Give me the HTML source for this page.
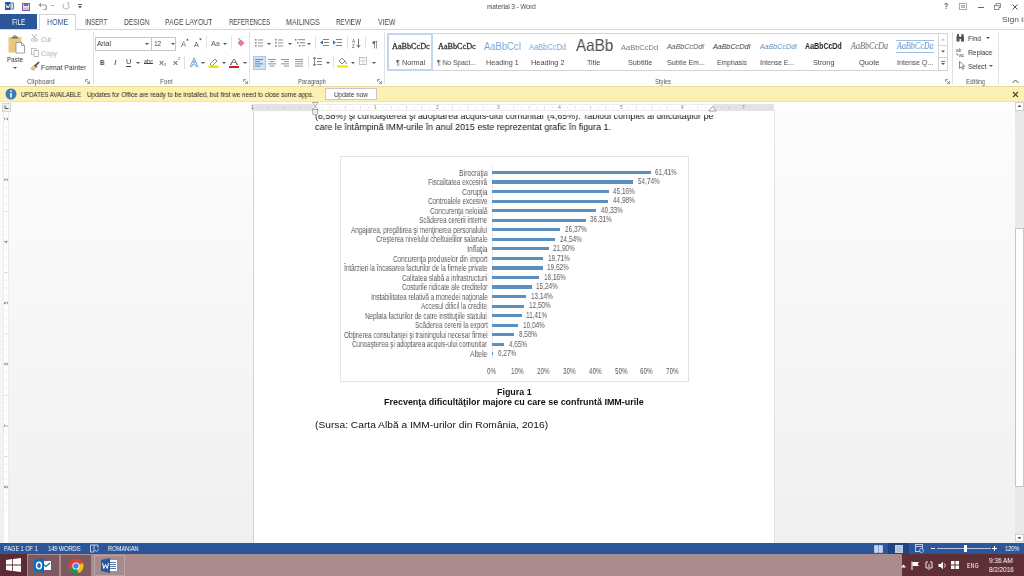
<!DOCTYPE html>
<html><head><meta charset="utf-8">
<style>
*{margin:0;padding:0;box-sizing:border-box}
html,body{width:1024px;height:576px;overflow:hidden;background:#fff;font-family:"Liberation Sans",sans-serif;position:relative}
.t{position:absolute;white-space:nowrap;transform-origin:0 0;will-change:transform}
.r{position:absolute}
</style></head><body>
<div class="r" style="left:0px;top:0px;width:1024px;height:29px;background:#fff"></div>
<div class="r" style="left:0px;top:29px;width:1024px;height:57px;background:#fff;border-top:1px solid #d6d6d6"></div>
<div class="r" style="left:0px;top:86px;width:1024px;height:16px;background:#fbf1b3;border-top:1px solid #e9dd9c;border-bottom:1px solid #efe5ab"></div>
<div class="r" style="left:0px;top:102px;width:1024px;height:441px;background:linear-gradient(#fdfdfd,#f0f0f0)"></div>
<div class="r" style="left:253px;top:110px;width:522px;height:433px;background:#fff;border-left:1px solid #d4d4d4;border-right:1px solid #e2e2e2"></div>
<div class="r" style="left:0px;top:543px;width:1024px;height:11px;background:#2b579a"></div>
<div class="r" style="left:0px;top:554px;width:1024px;height:22px;background:#aa8b8e"></div>
<svg class="r" style="left:5px;top:2px" width="9" height="8" viewBox="0 0 9 8"><rect x="4" y="1" width="4.5" height="6" fill="#fff" stroke="#2b579a" stroke-width="0.8"/><path d="M5.5 3 H7.5 M5.5 5 H7.5" stroke="#2b579a" stroke-width="0.6"/><rect x="0" y="0" width="5.5" height="8" fill="#2b579a"/><path d="M0.9 2.2 L1.9 6 L2.75 3.8 L3.6 6 L4.6 2.2" fill="none" stroke="#fff" stroke-width="0.8"/></svg>
<svg class="r" style="left:21.5px;top:2.5px" width="8" height="8" viewBox="0 0 8 8"><rect x="0.6" y="0.6" width="6.8" height="6.8" fill="#fff" stroke="#7e5fa3" stroke-width="1.2"/><rect x="2" y="0.6" width="4" height="2.6" fill="#7e5fa3"/><rect x="1.6" y="4.4" width="4.8" height="2.4" fill="#c9b8de"/></svg>
<svg class="r" style="left:38px;top:2px" width="9" height="8" viewBox="0 0 9 8"><path d="M2 3 L6 3 Q8.5 3 8.5 5.5 Q8.5 8 6 8 L4 8" fill="none" stroke="#9a9a9a" stroke-width="1.2"/><path d="M0.5 3 L3 0.5 L3 5.5 Z" fill="#9a9a9a"/></svg>
<div class="r" style="left:51px;top:5px;width:3px;height:1px;background:#b0b0b0"></div>
<svg class="r" style="left:61.5px;top:2px" width="8" height="8" viewBox="0 0 8 8"><path d="M5.8 1.6 A3 3 0 1 1 2.2 1.6" fill="none" stroke="#bdbdbd" stroke-width="1.1"/><path d="M4.6 0.2 L7.6 0.4 L6.6 3.2Z" fill="#bdbdbd"/></svg>
<div class="r" style="left:78px;top:4px;width:4px;height:1px;background:#555"></div>
<svg class="r" style="left:78px;top:6px" width="4" height="3" viewBox="0 0 4 3"><path d="M0 0 L4 0 L2 2.5 Z" fill="#555"/></svg>
<div class="t" style="left:487.00px;top:3.37px;font-size:7.6px;line-height:7.6px;color:#444;font-family:'Liberation Sans',sans-serif;transform:scale(0.838,1.000);">material 3 - Word</div>
<div class="t" style="left:944.30px;top:2.40px;font-size:8.5px;line-height:8.5px;color:#555;font-family:'Liberation Sans',sans-serif;font-weight:bold;transform:scale(0.810,1.000);">?</div>
<svg class="r" style="left:959px;top:3px" width="8" height="7" viewBox="0 0 8 7"><rect x="0.5" y="0.5" width="7" height="6" fill="none" stroke="#999" stroke-width="0.8"/><rect x="2" y="2" width="4" height="3" fill="#aaa"/><path d="M2.8 4.3 L4 3 L5.2 4.3" fill="none" stroke="#fff" stroke-width="0.7"/></svg>
<div class="r" style="left:977.5px;top:6.5px;width:6px;height:1px;background:#666"></div>
<svg class="r" style="left:994px;top:3px" width="7" height="7" viewBox="0 0 7 7"><rect x="0.5" y="2.5" width="4.5" height="4" fill="none" stroke="#777" stroke-width="0.8"/><path d="M2 2.5 V0.5 H6.5 V4.5 H5" fill="none" stroke="#777" stroke-width="0.8"/></svg>
<svg class="r" style="left:1011.5px;top:3.5px" width="6" height="6" viewBox="0 0 6 6"><path d="M0.5 0.5 L5.5 5.5 M5.5 0.5 L0.5 5.5" stroke="#555" stroke-width="1"/></svg>
<div class="t" style="left:1002.00px;top:15.53px;font-size:8px;line-height:8px;color:#555;font-family:'Liberation Sans',sans-serif;transform:scale(1.062,1.000);">Sign in</div>
<div class="r" style="left:0px;top:14px;width:37px;height:15px;background:#2b579a"></div>
<div class="t" style="left:11.80px;top:17.79px;font-size:8.4px;line-height:8.4px;color:#fff;font-family:'Liberation Sans',sans-serif;transform:scale(0.745,1.000);">FILE</div>
<div class="r" style="left:39px;top:14px;width:37px;height:16px;background:#fff;border:1px solid #d4d4d4;border-bottom:none"></div>
<div class="t" style="left:46.50px;top:17.79px;font-size:8.4px;line-height:8.4px;color:#2f5a94;font-family:'Liberation Sans',sans-serif;transform:scale(0.853,1.000);">HOME</div>
<div class="t" style="left:84.70px;top:17.79px;font-size:8.4px;line-height:8.4px;color:#444;font-family:'Liberation Sans',sans-serif;transform:scale(0.727,1.000);">INSERT</div>
<div class="t" style="left:123.50px;top:17.79px;font-size:8.4px;line-height:8.4px;color:#444;font-family:'Liberation Sans',sans-serif;transform:scale(0.792,1.000);">DESIGN</div>
<div class="t" style="left:165.00px;top:17.79px;font-size:8.4px;line-height:8.4px;color:#444;font-family:'Liberation Sans',sans-serif;transform:scale(0.818,1.000);">PAGE LAYOUT</div>
<div class="t" style="left:228.80px;top:17.79px;font-size:8.4px;line-height:8.4px;color:#444;font-family:'Liberation Sans',sans-serif;transform:scale(0.718,1.000);">REFERENCES</div>
<div class="t" style="left:286.00px;top:17.79px;font-size:8.4px;line-height:8.4px;color:#444;font-family:'Liberation Sans',sans-serif;transform:scale(0.842,1.000);">MAILINGS</div>
<div class="t" style="left:336.00px;top:17.79px;font-size:8.4px;line-height:8.4px;color:#444;font-family:'Liberation Sans',sans-serif;transform:scale(0.754,1.000);">REVIEW</div>
<div class="t" style="left:377.80px;top:17.79px;font-size:8.4px;line-height:8.4px;color:#444;font-family:'Liberation Sans',sans-serif;transform:scale(0.815,1.000);">VIEW</div>
<svg class="r" style="left:8px;top:34.5px" width="17" height="19" viewBox="0 0 17 19"><rect x="0.5" y="2" width="13" height="15.5" rx="0.5" fill="#e9c77c"/><path d="M3.5 3.5 L4.5 1.5 H9.5 L10.5 3.5Z" fill="#707070"/><circle cx="7" cy="1.3" r="1.1" fill="none" stroke="#707070" stroke-width="0.7"/><path d="M8 7.5 H13.5 L16.5 10.5 V18 H8 Z" fill="#fff" stroke="#8a8a8a" stroke-width="0.8"/><path d="M13.5 7.5 V10.5 H16.5" fill="none" stroke="#8a8a8a" stroke-width="0.8"/></svg>
<div class="t" style="left:7.00px;top:55.51px;font-size:7.2px;line-height:7.2px;color:#333;font-family:'Liberation Sans',sans-serif;transform:scale(0.870,1.000);">Paste</div>
<svg class="r" style="left:13px;top:67px" width="4" height="3" viewBox="0 0 4 3"><path d="M0 0 L4 0 L2 2 Z" fill="#555"/></svg>
<svg class="r" style="left:31px;top:34px" width="7" height="8" viewBox="0 0 7 8"><circle cx="1.8" cy="6" r="1.4" fill="none" stroke="#b0b0c8" stroke-width="0.8"/><circle cx="5.2" cy="6" r="1.4" fill="none" stroke="#b0b0c8" stroke-width="0.8"/><path d="M1 0 L5 4.8 M6 0 L2 4.8" stroke="#aaa" stroke-width="0.8"/></svg>
<div class="t" style="left:41.00px;top:35.61px;font-size:7.2px;line-height:7.2px;color:#a8a8a8;font-family:'Liberation Sans',sans-serif;transform:scale(0.875,1.000);">Cut</div>
<svg class="r" style="left:31px;top:48px" width="8" height="9" viewBox="0 0 8 9"><rect x="0.5" y="0.5" width="4.5" height="6" fill="#fff" stroke="#b0b0b0" stroke-width="0.8"/><rect x="3" y="2.5" width="4.5" height="6" fill="#fff" stroke="#b0b0b0" stroke-width="0.8"/></svg>
<div class="t" style="left:41.00px;top:49.71px;font-size:7.2px;line-height:7.2px;color:#a8a8a8;font-family:'Liberation Sans',sans-serif;transform:scale(0.952,1.000);">Copy</div>
<svg class="r" style="left:30px;top:61px" width="10" height="10" viewBox="0 0 10 10"><path d="M0.8 7.5 L3.5 4.8 L5.8 7.1 L3.1 9.8Z" fill="#e2c27a" stroke="#c9a24e" stroke-width="0.5"/><path d="M3.9 4.4 L5.2 3.1 L7.5 5.4 L6.2 6.7Z" fill="#555"/><path d="M5.6 3.2 L8.6 0.4 L9.6 1.4 L6.8 4.4Z" fill="#444"/></svg>
<div class="t" style="left:41.00px;top:64.11px;font-size:7.2px;line-height:7.2px;color:#333;font-family:'Liberation Sans',sans-serif;transform:scale(0.945,1.000);">Format Painter</div>
<div class="t" style="left:27.30px;top:77.51px;font-size:7.2px;line-height:7.2px;color:#555;font-family:'Liberation Sans',sans-serif;transform:scale(0.899,1.000);">Clipboard</div>
<svg class="r" style="left:85px;top:79px" width="5" height="5" viewBox="0 0 5 5"><path d="M0.5 0.5 H3 M0.5 0.5 V3 M1.5 1.5 L4.5 4.5 M4.5 2 V4.5 H2" fill="none" stroke="#777" stroke-width="0.7"/></svg>
<div class="r" style="left:93px;top:32px;width:1px;height:52px;background:#e2e2e2"></div>
<div class="r" style="left:95px;top:37px;width:57px;height:14px;background:#fff;border:1px solid #c6c6c6"></div>
<div class="r" style="left:151px;top:37px;width:25px;height:14px;background:#fff;border:1px solid #c6c6c6"></div>
<div class="t" style="left:96.60px;top:40.07px;font-size:7.6px;line-height:7.6px;color:#333;font-family:'Liberation Sans',sans-serif;transform:scale(0.914,1.000);">Arial</div>
<svg class="r" style="left:145px;top:43px" width="4" height="3" viewBox="0 0 4 3"><path d="M0 0 L4 0 L2 2 Z" fill="#555"/></svg>
<div class="t" style="left:154.00px;top:40.07px;font-size:7.6px;line-height:7.6px;color:#333;font-family:'Liberation Sans',sans-serif;transform:scale(0.830,1.000);">12</div>
<svg class="r" style="left:170.5px;top:43px" width="4" height="3" viewBox="0 0 4 3"><path d="M0 0 L4 0 L2 2 Z" fill="#555"/></svg>
<div class="t" style="left:181.40px;top:40.30px;font-size:8.5px;line-height:8.5px;color:#555;font-family:'Liberation Sans',sans-serif;transform:scale(0.896,1.000);">A</div>
<svg class="r" style="left:186px;top:38px" width="3" height="3" viewBox="0 0 3 3"><path d="M0 2.5 L1.5 0.5 L3 2.5Z" fill="#555"/></svg>
<div class="t" style="left:194.40px;top:41.41px;font-size:7.2px;line-height:7.2px;color:#555;font-family:'Liberation Sans',sans-serif;transform:scale(0.954,1.000);">A</div>
<svg class="r" style="left:199px;top:38px" width="3" height="3" viewBox="0 0 3 3"><path d="M0 0.5 L1.5 2.5 L3 0.5Z" fill="#555"/></svg>
<div class="r" style="left:206px;top:36px;width:1px;height:13px;background:#e2e2e2"></div>
<div class="t" style="left:211.00px;top:39.57px;font-size:7.6px;line-height:7.6px;color:#555;font-family:'Liberation Sans',sans-serif;transform:scale(0.934,1.000);">Aa</div>
<svg class="r" style="left:222.5px;top:43px" width="4" height="3" viewBox="0 0 4 3"><path d="M0 0 L4 0 L2 2 Z" fill="#555"/></svg>
<div class="r" style="left:231px;top:36px;width:1px;height:13px;background:#e2e2e2"></div>
<svg class="r" style="left:236px;top:38px" width="9" height="9" viewBox="0 0 9 9"><path d="M1.5 5 L5 1.5 L8.5 5 L5 8.5Z" fill="#e87a9a"/><path d="M2 1 L3.5 0.5 L4 3" stroke="#777" stroke-width="0.6" fill="none"/></svg>
<div class="t" style="left:99.50px;top:58.91px;font-size:7.2px;line-height:7.2px;color:#444;font-family:'Liberation Sans',sans-serif;font-weight:bold;transform:scale(0.868,1.000);">B</div>
<div class="t" style="left:113.50px;top:58.91px;font-size:7.2px;line-height:7.2px;color:#444;font-family:'Liberation Sans',sans-serif;font-style:italic;transform:scale(1.240,1.000);">I</div>
<div class="t" style="left:125.50px;top:58.21px;font-size:7.2px;line-height:7.2px;color:#444;font-family:'Liberation Sans',sans-serif;transform:scale(1.061,1.000);">U</div>
<div class="r" style="left:125.5px;top:66px;width:5.5px;height:0.8px;background:#444"></div>
<svg class="r" style="left:136px;top:62px" width="4" height="3" viewBox="0 0 4 3"><path d="M0 0 L4 0 L2 2 Z" fill="#555"/></svg>
<div class="t" style="left:144.00px;top:59.24px;font-size:6.8px;line-height:6.8px;color:#444;font-family:'Liberation Sans',sans-serif;transform:scale(0.822,1.000);">abc</div>
<div class="r" style="left:144px;top:62.5px;width:9px;height:0.7px;background:#444"></div>
<div class="t" style="left:159.00px;top:58.57px;font-size:7.6px;line-height:7.6px;color:#444;font-family:'Liberation Sans',sans-serif;transform:scale(1.316,1.000);">x</div>
<div class="t" style="left:164.00px;top:63.11px;font-size:4px;line-height:4px;color:#444;font-family:'Liberation Sans',sans-serif;transform:scale(0.901,1.000);">2</div>
<div class="t" style="left:172.50px;top:58.57px;font-size:7.6px;line-height:7.6px;color:#444;font-family:'Liberation Sans',sans-serif;transform:scale(1.316,1.000);">x</div>
<div class="t" style="left:177.50px;top:57.11px;font-size:4px;line-height:4px;color:#444;font-family:'Liberation Sans',sans-serif;transform:scale(0.901,1.000);">2</div>
<div class="r" style="left:184px;top:56px;width:1px;height:13px;background:#e2e2e2"></div>
<svg class="r" style="left:189px;top:57px" width="10" height="10" viewBox="0 0 10 10"><path d="M1.2 9.5 L5 0.8 L8.8 9.5 H7 L6.2 7.2 H3.8 L3 9.5Z M4.3 5.8 H5.7 L5 3.6Z" fill="#fff" stroke="#6a9fd8" stroke-width="0.9"/></svg>
<svg class="r" style="left:201px;top:62px" width="4" height="3" viewBox="0 0 4 3"><path d="M0 0 L4 0 L2 2 Z" fill="#555"/></svg>
<svg class="r" style="left:208px;top:57px" width="11" height="11" viewBox="0 0 11 11"><path d="M2 7 L7 2 L9 4 L4 9Z" fill="none" stroke="#666" stroke-width="0.8"/><rect x="0.5" y="8.5" width="10" height="2.5" fill="#f5e100"/></svg>
<svg class="r" style="left:221.5px;top:62px" width="4" height="3" viewBox="0 0 4 3"><path d="M0 0 L4 0 L2 2 Z" fill="#555"/></svg>
<div class="t" style="left:229.50px;top:57.60px;font-size:8.5px;line-height:8.5px;color:#444;font-family:'Liberation Sans',sans-serif;transform:scale(1.405,1.000);">A</div>
<div class="r" style="left:229px;top:66px;width:10px;height:2px;background:#d22020"></div>
<svg class="r" style="left:243px;top:62px" width="4" height="3" viewBox="0 0 4 3"><path d="M0 0 L4 0 L2 2 Z" fill="#555"/></svg>
<div class="t" style="left:159.50px;top:77.51px;font-size:7.2px;line-height:7.2px;color:#555;font-family:'Liberation Sans',sans-serif;transform:scale(0.868,1.000);">Font</div>
<svg class="r" style="left:243px;top:79px" width="5" height="5" viewBox="0 0 5 5"><path d="M0.5 0.5 H3 M0.5 0.5 V3 M1.5 1.5 L4.5 4.5 M4.5 2 V4.5 H2" fill="none" stroke="#777" stroke-width="0.7"/></svg>
<div class="r" style="left:249px;top:32px;width:1px;height:52px;background:#e2e2e2"></div>
<svg class="r" style="left:255px;top:39px" width="8" height="11" viewBox="0 0 8 11"><rect x="0" y="0.0" width="1.6" height="1.6" fill="#888"/><rect x="3" y="0.5" width="5" height="0.9" fill="#888"/><rect x="0" y="3.0" width="1.6" height="1.6" fill="#888"/><rect x="3" y="3.5" width="5" height="0.9" fill="#888"/><rect x="0" y="6.0" width="1.6" height="1.6" fill="#888"/><rect x="3" y="6.5" width="5" height="0.9" fill="#888"/></svg>
<svg class="r" style="left:267px;top:43px" width="4" height="3" viewBox="0 0 4 3"><path d="M0 0 L4 0 L2 2 Z" fill="#555"/></svg>
<svg class="r" style="left:275px;top:39px" width="8" height="11" viewBox="0 0 8 11"><rect x="0" y="0.0" width="1.6" height="1.6" fill="#888"/><rect x="3" y="0.5" width="5" height="0.9" fill="#888"/><rect x="0" y="3.0" width="1.6" height="1.6" fill="#888"/><rect x="3" y="3.5" width="5" height="0.9" fill="#888"/><rect x="0" y="6.0" width="1.6" height="1.6" fill="#888"/><rect x="3" y="6.5" width="5" height="0.9" fill="#888"/></svg>
<svg class="r" style="left:287.5px;top:43px" width="4" height="3" viewBox="0 0 4 3"><path d="M0 0 L4 0 L2 2 Z" fill="#555"/></svg>
<svg class="r" style="left:295px;top:39px" width="10" height="9" viewBox="0 0 10 9"><rect x="0" y="0" width="1.5" height="1.5" fill="#777"/><rect x="3" y="0.3" width="7" height="0.9" fill="#777"/><rect x="2" y="3" width="1.5" height="1.5" fill="#777"/><rect x="5" y="3.3" width="5" height="0.9" fill="#777"/><rect x="4" y="6" width="1.5" height="1.5" fill="#777"/><rect x="7" y="6.3" width="3" height="0.9" fill="#777"/></svg>
<svg class="r" style="left:307px;top:43px" width="4" height="3" viewBox="0 0 4 3"><path d="M0 0 L4 0 L2 2 Z" fill="#555"/></svg>
<div class="r" style="left:315px;top:36px;width:1px;height:13px;background:#e2e2e2"></div>
<svg class="r" style="left:320px;top:39px" width="9" height="8" viewBox="0 0 9 8"><rect x="3" y="0" width="6" height="0.9" fill="#777"/><rect x="4" y="3" width="5" height="0.9" fill="#777"/><rect x="3" y="6" width="6" height="0.9" fill="#777"/><path d="M0 3.5 L3 1.5 V5.5Z" fill="#2e6db4"/></svg>
<svg class="r" style="left:333px;top:39px" width="9" height="8" viewBox="0 0 9 8"><rect x="3" y="0" width="6" height="0.9" fill="#777"/><rect x="4" y="3" width="5" height="0.9" fill="#777"/><rect x="3" y="6" width="6" height="0.9" fill="#777"/><path d="M3 3.5 L0 1.5 V5.5Z" fill="#2e6db4"/></svg>
<div class="r" style="left:347px;top:36px;width:1px;height:13px;background:#e2e2e2"></div>
<svg class="r" style="left:352px;top:38px" width="9" height="10" viewBox="0 0 9 10"><text x="0" y="4.5" font-size="4.5" fill="#555" font-family="Liberation Sans">A</text><text x="0" y="9.5" font-size="4.5" fill="#555" font-family="Liberation Sans">Z</text><path d="M6.5 0.5 V9 M4.8 7 L6.5 9.5 L8.2 7" fill="none" stroke="#555" stroke-width="0.8"/></svg>
<div class="r" style="left:365px;top:36px;width:1px;height:13px;background:#e2e2e2"></div>
<div class="t" style="left:372.30px;top:39.80px;font-size:8.5px;line-height:8.5px;color:#666;font-family:'Liberation Sans',sans-serif;transform:scale(1.319,1.000);">¶</div>
<div class="r" style="left:252.5px;top:56px;width:13px;height:14px;background:#cfe2f7;border:1px solid #a6c8ec"></div>
<svg class="r" style="left:255px;top:59px" width="8" height="8" viewBox="0 0 8 8"><rect x="0" y="0.0" width="8" height="0.9" fill="#5a7fae"/><rect x="0" y="2.2" width="5" height="0.9" fill="#5a7fae"/><rect x="0" y="4.4" width="8" height="0.9" fill="#5a7fae"/><rect x="0" y="6.6" width="5" height="0.9" fill="#5a7fae"/></svg>
<svg class="r" style="left:268px;top:59px" width="8" height="8" viewBox="0 0 8 8"><rect x="0.0" y="0.0" width="8" height="0.9" fill="#8a8a8a"/><rect x="1.5" y="2.2" width="5" height="0.9" fill="#8a8a8a"/><rect x="0.0" y="4.4" width="8" height="0.9" fill="#8a8a8a"/><rect x="1.5" y="6.6" width="5" height="0.9" fill="#8a8a8a"/></svg>
<svg class="r" style="left:281px;top:59px" width="8" height="8" viewBox="0 0 8 8"><rect x="0" y="0.0" width="8" height="0.9" fill="#8a8a8a"/><rect x="3" y="2.2" width="5" height="0.9" fill="#8a8a8a"/><rect x="0" y="4.4" width="8" height="0.9" fill="#8a8a8a"/><rect x="3" y="6.6" width="5" height="0.9" fill="#8a8a8a"/></svg>
<svg class="r" style="left:295px;top:59px" width="8" height="8" viewBox="0 0 8 8"><rect x="0" y="0.0" width="8" height="0.9" fill="#8a8a8a"/><rect x="0" y="2.2" width="8" height="0.9" fill="#8a8a8a"/><rect x="0" y="4.4" width="8" height="0.9" fill="#8a8a8a"/><rect x="0" y="6.6" width="8" height="0.9" fill="#8a8a8a"/></svg>
<div class="r" style="left:308px;top:56px;width:1px;height:13px;background:#e2e2e2"></div>
<svg class="r" style="left:313px;top:57px" width="9" height="10" viewBox="0 0 9 10"><path d="M1.5 0.5 V8.5 M0 2 L1.5 0 L3 2 M0 7 L1.5 9 L3 7" fill="none" stroke="#555" stroke-width="0.7"/><rect x="4" y="1" width="5" height="0.9" fill="#777"/><rect x="4" y="4" width="5" height="0.9" fill="#777"/><rect x="4" y="7" width="5" height="0.9" fill="#777"/></svg>
<svg class="r" style="left:325.5px;top:62px" width="4" height="3" viewBox="0 0 4 3"><path d="M0 0 L4 0 L2 2 Z" fill="#555"/></svg>
<div class="r" style="left:333px;top:56px;width:1px;height:13px;background:#e2e2e2"></div>
<svg class="r" style="left:337px;top:56px" width="11" height="12" viewBox="0 0 11 12"><path d="M2 5 L5 2 L8 5 L5 8Z" fill="#fff" stroke="#666" stroke-width="0.8"/><path d="M8 5 Q10 7 9 8" fill="none" stroke="#777" stroke-width="0.8"/><rect x="0" y="9.5" width="11" height="2" fill="#f5e100"/></svg>
<svg class="r" style="left:351px;top:62px" width="4" height="3" viewBox="0 0 4 3"><path d="M0 0 L4 0 L2 2 Z" fill="#555"/></svg>
<svg class="r" style="left:359px;top:57px" width="8" height="8" viewBox="0 0 8 8"><rect x="0.5" y="0.5" width="7" height="7" fill="none" stroke="#aaa" stroke-width="0.7"/><path d="M4 0.5 V7.5 M0.5 4 H7.5" stroke="#bbb" stroke-width="0.6"/></svg>
<svg class="r" style="left:371.5px;top:62px" width="4" height="3" viewBox="0 0 4 3"><path d="M0 0 L4 0 L2 2 Z" fill="#555"/></svg>
<div class="t" style="left:298.00px;top:77.51px;font-size:7.2px;line-height:7.2px;color:#555;font-family:'Liberation Sans',sans-serif;transform:scale(0.833,1.000);">Paragraph</div>
<svg class="r" style="left:377px;top:79px" width="5" height="5" viewBox="0 0 5 5"><path d="M0.5 0.5 H3 M0.5 0.5 V3 M1.5 1.5 L4.5 4.5 M4.5 2 V4.5 H2" fill="none" stroke="#777" stroke-width="0.7"/></svg>
<div class="r" style="left:384px;top:32px;width:1px;height:52px;background:#e2e2e2"></div>
<div class="r" style="left:387px;top:33px;width:561px;height:38px;background:#fff;border:1px solid #d4d4d4"></div>
<div class="r" style="left:387px;top:33px;width:46px;height:38px;border:2.5px solid #c3d5ef"></div>
<div class="t" style="left:392.00px;top:42.93px;font-size:8.2px;line-height:8.2px;color:#333;font-family:'Liberation Serif',serif;-webkit-text-stroke:0.3px #333;">AaBbCcDc</div>
<div class="t" style="left:396.00px;top:58.91px;font-size:7.2px;line-height:7.2px;color:#484848;font-family:'Liberation Sans',sans-serif;transform:scale(1.007,1.000);">¶ Normal</div>
<div class="t" style="left:438.00px;top:42.93px;font-size:8.2px;line-height:8.2px;color:#333;font-family:'Liberation Serif',serif;-webkit-text-stroke:0.3px #333;">AaBbCcDc</div>
<div class="t" style="left:437.00px;top:58.91px;font-size:7.2px;line-height:7.2px;color:#484848;font-family:'Liberation Sans',sans-serif;transform:scale(0.942,1.000);">¶ No Spaci...</div>
<div class="t" style="left:483.50px;top:42.03px;font-size:10px;line-height:10px;color:#76a5d6;font-family:'Liberation Sans',sans-serif;transform:scale(0.940,1.000);">AaBbCcI</div>
<div class="t" style="left:485.50px;top:58.91px;font-size:7.2px;line-height:7.2px;color:#484848;font-family:'Liberation Sans',sans-serif;transform:scale(0.990,1.000);">Heading 1</div>
<div class="t" style="left:529.40px;top:42.80px;font-size:8.5px;line-height:8.5px;color:#76a5d6;font-family:'Liberation Sans',sans-serif;transform:scale(0.883,1.000);">AaBbCcDd</div>
<div class="t" style="left:531.00px;top:58.91px;font-size:7.2px;line-height:7.2px;color:#484848;font-family:'Liberation Sans',sans-serif;transform:scale(1.023,1.000);">Heading 2</div>
<div class="t" style="left:575.80px;top:37.33px;font-size:16.5px;line-height:16.5px;color:#4a4a4a;font-family:'Liberation Sans',sans-serif;transform:scale(0.922,1.000);">AaBb</div>
<div class="t" style="left:587.00px;top:58.91px;font-size:7.2px;line-height:7.2px;color:#484848;font-family:'Liberation Sans',sans-serif;transform:scale(0.976,1.000);">Title</div>
<div class="t" style="left:621.00px;top:43.65px;font-size:7.5px;line-height:7.5px;color:#777;font-family:'Liberation Sans',sans-serif;">AaBbCcDd</div>
<div class="t" style="left:627.80px;top:58.91px;font-size:7.2px;line-height:7.2px;color:#484848;font-family:'Liberation Sans',sans-serif;transform:scale(1.008,1.000);">Subtitle</div>
<div class="t" style="left:667.36px;top:43.23px;font-size:8px;line-height:8px;color:#555;font-family:'Liberation Sans',sans-serif;font-style:italic;transform:scale(0.889,1.000);">AaBbCcDdI</div>
<div class="t" style="left:667.00px;top:58.91px;font-size:7.2px;line-height:7.2px;color:#484848;font-family:'Liberation Sans',sans-serif;transform:scale(0.957,1.000);">Subtle Em...</div>
<div class="t" style="left:713.36px;top:43.23px;font-size:8px;line-height:8px;color:#333;font-family:'Liberation Sans',sans-serif;font-style:italic;transform:scale(0.896,1.000);">AaBbCcDdI</div>
<div class="t" style="left:716.50px;top:58.91px;font-size:7.2px;line-height:7.2px;color:#484848;font-family:'Liberation Sans',sans-serif;transform:scale(0.949,1.000);">Emphasis</div>
<div class="t" style="left:759.85px;top:43.23px;font-size:8px;line-height:8px;color:#5b8fc7;font-family:'Liberation Sans',sans-serif;font-style:italic;transform:scale(0.884,1.000);">AaBbCcDdI</div>
<div class="t" style="left:760.00px;top:58.91px;font-size:7.2px;line-height:7.2px;color:#484848;font-family:'Liberation Sans',sans-serif;transform:scale(0.933,1.000);">Intense E...</div>
<div class="t" style="left:805.00px;top:43.06px;font-size:8.2px;line-height:8.2px;color:#222;font-family:'Liberation Sans',sans-serif;font-weight:bold;transform:scale(0.859,1.000);">AaBbCcDd</div>
<div class="t" style="left:812.50px;top:58.91px;font-size:7.2px;line-height:7.2px;color:#484848;font-family:'Liberation Sans',sans-serif;transform:scale(1.014,1.000);">Strong</div>
<div class="t" style="left:850.95px;top:42.04px;font-size:9.5px;line-height:9.5px;color:#666;font-family:'Liberation Serif',serif;font-style:italic;transform:scale(0.856,1.000);">AaBbCcDa</div>
<div class="t" style="left:858.50px;top:58.91px;font-size:7.2px;line-height:7.2px;color:#484848;font-family:'Liberation Sans',sans-serif;transform:scale(1.045,1.000);">Quote</div>
<div class="t" style="left:897.24px;top:42.04px;font-size:9.5px;line-height:9.5px;color:#5b8fc7;font-family:'Liberation Serif',serif;font-style:italic;transform:scale(0.845,1.000);">AaBbCcDa</div>
<div class="t" style="left:896.80px;top:58.91px;font-size:7.2px;line-height:7.2px;color:#484848;font-family:'Liberation Sans',sans-serif;transform:scale(0.972,1.000);">Intense Q...</div>
<div class="r" style="left:896px;top:40px;width:38px;height:1px;background:#9cc0e5"></div>
<div class="r" style="left:896px;top:52px;width:38px;height:1px;background:#9cc0e5"></div>
<div class="r" style="left:938px;top:33px;width:10px;height:38px;background:#fff;border:1px solid #d4d4d4"></div>
<div class="r" style="left:938px;top:45px;width:10px;height:1px;background:#d4d4d4"></div>
<div class="r" style="left:938px;top:57px;width:10px;height:1px;background:#d4d4d4"></div>
<svg class="r" style="left:941px;top:38px" width="4" height="3" viewBox="0 0 4 3"><path d="M0 2.5 L2 0.5 L4 2.5Z" fill="#c0c0c0"/></svg>
<svg class="r" style="left:941px;top:50px" width="4" height="3" viewBox="0 0 4 3"><path d="M0 0.5 L2 2.5 L4 0.5Z" fill="#555"/></svg>
<svg class="r" style="left:941px;top:61px" width="4" height="5" viewBox="0 0 4 5"><rect x="0" y="0" width="4" height="0.8" fill="#555"/><path d="M0 2 L2 4 L4 2Z" fill="#555"/></svg>
<div class="t" style="left:655.00px;top:77.51px;font-size:7.2px;line-height:7.2px;color:#555;font-family:'Liberation Sans',sans-serif;transform:scale(0.815,1.000);">Styles</div>
<svg class="r" style="left:945px;top:79px" width="5" height="5" viewBox="0 0 5 5"><path d="M0.5 0.5 H3 M0.5 0.5 V3 M1.5 1.5 L4.5 4.5 M4.5 2 V4.5 H2" fill="none" stroke="#777" stroke-width="0.7"/></svg>
<div class="r" style="left:952px;top:32px;width:1px;height:52px;background:#e2e2e2"></div>
<svg class="r" style="left:956px;top:34px" width="9" height="8" viewBox="0 0 9 8"><rect x="0.5" y="2" width="3" height="5.5" fill="#555"/><rect x="5" y="2" width="3" height="5.5" fill="#555"/><rect x="3" y="3" width="2.5" height="2" fill="#555"/><rect x="1" y="0" width="2" height="2" fill="#555"/><rect x="5.5" y="0" width="2" height="2" fill="#555"/></svg>
<div class="t" style="left:968.00px;top:34.74px;font-size:7.4px;line-height:7.4px;color:#333;font-family:'Liberation Sans',sans-serif;transform:scale(0.903,1.000);">Find</div>
<svg class="r" style="left:986px;top:37px" width="4" height="3" viewBox="0 0 4 3"><path d="M0 0 L4 0 L2 2 Z" fill="#555"/></svg>
<svg class="r" style="left:956px;top:47px" width="9" height="10" viewBox="0 0 9 10"><text x="0" y="4.5" font-size="5" fill="#555" font-family="Liberation Sans">ab</text><text x="3" y="9.5" font-size="5" fill="#555" font-family="Liberation Sans">ac</text><path d="M1 6 V8 H2.5" fill="none" stroke="#2e6db4" stroke-width="0.7"/></svg>
<div class="t" style="left:968.00px;top:48.74px;font-size:7.4px;line-height:7.4px;color:#333;font-family:'Liberation Sans',sans-serif;transform:scale(0.898,1.000);">Replace</div>
<svg class="r" style="left:959px;top:61px" width="6" height="9" viewBox="0 0 6 9"><path d="M0.5 0.5 V7.5 L2.3 5.8 L3.8 8.5 L4.8 8 L3.5 5.3 L5.8 5.3Z" fill="#fff" stroke="#555" stroke-width="0.7"/></svg>
<div class="t" style="left:968.00px;top:62.74px;font-size:7.4px;line-height:7.4px;color:#333;font-family:'Liberation Sans',sans-serif;transform:scale(0.899,1.000);">Select</div>
<svg class="r" style="left:988.5px;top:65px" width="4" height="3" viewBox="0 0 4 3"><path d="M0 0 L4 0 L2 2 Z" fill="#555"/></svg>
<div class="t" style="left:965.80px;top:77.51px;font-size:7.2px;line-height:7.2px;color:#555;font-family:'Liberation Sans',sans-serif;transform:scale(0.881,1.000);">Editing</div>
<div class="r" style="left:998px;top:32px;width:1px;height:52px;background:#e2e2e2"></div>
<svg class="r" style="left:1012px;top:79px" width="7" height="5" viewBox="0 0 7 5"><path d="M0.5 4 L3.5 1 L6.5 4" fill="none" stroke="#555" stroke-width="1"/></svg>
<svg class="r" style="left:5px;top:88px" width="12" height="12" viewBox="0 0 12 12"><circle cx="6" cy="6" r="5.5" fill="#3f79b6"/><rect x="5.2" y="5" width="1.6" height="4.5" fill="#fff"/><circle cx="6" cy="3.2" r="0.9" fill="#fff"/></svg>
<div class="t" style="left:21.30px;top:91.07px;font-size:7px;line-height:7px;color:#262626;font-family:'Liberation Sans',sans-serif;transform:scale(0.847,1.000);">UPDATES AVAILABLE</div>
<div class="t" style="left:86.80px;top:91.07px;font-size:7px;line-height:7px;color:#262626;font-family:'Liberation Sans',sans-serif;transform:scale(0.898,1.000);">Updates for Office are ready to be installed, but first we need to close some apps.</div>
<div class="r" style="left:325px;top:88px;width:52px;height:12px;background:#fff;border:1px solid #c8c8c8"></div>
<div class="t" style="left:333.50px;top:91.07px;font-size:7px;line-height:7px;color:#333;font-family:'Liberation Sans',sans-serif;transform:scale(0.904,1.000);">Update now</div>
<svg class="r" style="left:1012px;top:91px" width="7" height="7" viewBox="0 0 7 7"><path d="M1 1 L6 6 M6 1 L1 6" stroke="#444" stroke-width="1.1"/></svg>
<div class="r" style="left:252px;top:104px;width:522px;height:7px;background:#fff;border:1px solid #ececec"></div>
<div class="r" style="left:252px;top:104px;width:61px;height:7px;background:#e3e3e3"></div>
<div class="r" style="left:713px;top:104px;width:61px;height:7px;background:#e3e3e3"></div>
<svg class="r" style="left:252px;top:104px" width="522" height="7" viewBox="0 0 522 7"><rect x="8.66" y="3.00" width="0.7" height="1" fill="#bdbdbd"/><rect x="16.33" y="2.50" width="0.7" height="2" fill="#bdbdbd"/><rect x="23.99" y="3.00" width="0.7" height="1" fill="#bdbdbd"/><rect x="31.65" y="2.25" width="0.7" height="2.5" fill="#bdbdbd"/><rect x="39.31" y="3.00" width="0.7" height="1" fill="#bdbdbd"/><rect x="46.98" y="2.50" width="0.7" height="2" fill="#bdbdbd"/><rect x="54.64" y="3.00" width="0.7" height="1" fill="#bdbdbd"/><rect x="69.96" y="3.00" width="0.7" height="1" fill="#bdbdbd"/><rect x="77.62" y="2.50" width="0.7" height="2" fill="#bdbdbd"/><rect x="85.29" y="3.00" width="0.7" height="1" fill="#bdbdbd"/><rect x="92.95" y="2.25" width="0.7" height="2.5" fill="#bdbdbd"/><rect x="100.61" y="3.00" width="0.7" height="1" fill="#bdbdbd"/><rect x="108.27" y="2.50" width="0.7" height="2" fill="#bdbdbd"/><rect x="115.94" y="3.00" width="0.7" height="1" fill="#bdbdbd"/><rect x="131.26" y="3.00" width="0.7" height="1" fill="#bdbdbd"/><rect x="138.93" y="2.50" width="0.7" height="2" fill="#bdbdbd"/><rect x="146.59" y="3.00" width="0.7" height="1" fill="#bdbdbd"/><rect x="154.25" y="2.25" width="0.7" height="2.5" fill="#bdbdbd"/><rect x="161.91" y="3.00" width="0.7" height="1" fill="#bdbdbd"/><rect x="169.57" y="2.50" width="0.7" height="2" fill="#bdbdbd"/><rect x="177.24" y="3.00" width="0.7" height="1" fill="#bdbdbd"/><rect x="192.56" y="3.00" width="0.7" height="1" fill="#bdbdbd"/><rect x="200.23" y="2.50" width="0.7" height="2" fill="#bdbdbd"/><rect x="207.89" y="3.00" width="0.7" height="1" fill="#bdbdbd"/><rect x="215.55" y="2.25" width="0.7" height="2.5" fill="#bdbdbd"/><rect x="223.21" y="3.00" width="0.7" height="1" fill="#bdbdbd"/><rect x="230.88" y="2.50" width="0.7" height="2" fill="#bdbdbd"/><rect x="238.54" y="3.00" width="0.7" height="1" fill="#bdbdbd"/><rect x="253.86" y="3.00" width="0.7" height="1" fill="#bdbdbd"/><rect x="261.52" y="2.50" width="0.7" height="2" fill="#bdbdbd"/><rect x="269.19" y="3.00" width="0.7" height="1" fill="#bdbdbd"/><rect x="276.85" y="2.25" width="0.7" height="2.5" fill="#bdbdbd"/><rect x="284.51" y="3.00" width="0.7" height="1" fill="#bdbdbd"/><rect x="292.17" y="2.50" width="0.7" height="2" fill="#bdbdbd"/><rect x="299.84" y="3.00" width="0.7" height="1" fill="#bdbdbd"/><rect x="315.16" y="3.00" width="0.7" height="1" fill="#bdbdbd"/><rect x="322.83" y="2.50" width="0.7" height="2" fill="#bdbdbd"/><rect x="330.49" y="3.00" width="0.7" height="1" fill="#bdbdbd"/><rect x="338.15" y="2.25" width="0.7" height="2.5" fill="#bdbdbd"/><rect x="345.81" y="3.00" width="0.7" height="1" fill="#bdbdbd"/><rect x="353.48" y="2.50" width="0.7" height="2" fill="#bdbdbd"/><rect x="361.14" y="3.00" width="0.7" height="1" fill="#bdbdbd"/><rect x="376.46" y="3.00" width="0.7" height="1" fill="#bdbdbd"/><rect x="384.12" y="2.50" width="0.7" height="2" fill="#bdbdbd"/><rect x="391.79" y="3.00" width="0.7" height="1" fill="#bdbdbd"/><rect x="399.45" y="2.25" width="0.7" height="2.5" fill="#bdbdbd"/><rect x="407.11" y="3.00" width="0.7" height="1" fill="#bdbdbd"/><rect x="414.77" y="2.50" width="0.7" height="2" fill="#bdbdbd"/><rect x="422.44" y="3.00" width="0.7" height="1" fill="#bdbdbd"/><rect x="437.76" y="3.00" width="0.7" height="1" fill="#bdbdbd"/><rect x="445.42" y="2.50" width="0.7" height="2" fill="#bdbdbd"/><rect x="453.09" y="3.00" width="0.7" height="1" fill="#bdbdbd"/><rect x="460.75" y="2.25" width="0.7" height="2.5" fill="#bdbdbd"/><rect x="468.41" y="3.00" width="0.7" height="1" fill="#bdbdbd"/><rect x="476.08" y="2.50" width="0.7" height="2" fill="#bdbdbd"/><rect x="483.74" y="3.00" width="0.7" height="1" fill="#bdbdbd"/></svg>
<div class="t" style="left:374.30px;top:104.84px;font-size:5.5px;line-height:5.5px;color:#777;font-family:'Liberation Sans',sans-serif;transform:scale(0.852,1.000);">1</div>
<div class="t" style="left:435.60px;top:104.84px;font-size:5.5px;line-height:5.5px;color:#777;font-family:'Liberation Sans',sans-serif;transform:scale(0.852,1.000);">2</div>
<div class="t" style="left:496.90px;top:104.84px;font-size:5.5px;line-height:5.5px;color:#777;font-family:'Liberation Sans',sans-serif;transform:scale(0.852,1.000);">3</div>
<div class="t" style="left:558.20px;top:104.84px;font-size:5.5px;line-height:5.5px;color:#777;font-family:'Liberation Sans',sans-serif;transform:scale(0.852,1.000);">4</div>
<div class="t" style="left:619.50px;top:104.84px;font-size:5.5px;line-height:5.5px;color:#777;font-family:'Liberation Sans',sans-serif;transform:scale(0.852,1.000);">5</div>
<div class="t" style="left:680.80px;top:104.84px;font-size:5.5px;line-height:5.5px;color:#777;font-family:'Liberation Sans',sans-serif;transform:scale(0.852,1.000);">6</div>
<div class="t" style="left:742.10px;top:104.84px;font-size:5.5px;line-height:5.5px;color:#777;font-family:'Liberation Sans',sans-serif;transform:scale(0.852,1.000);">7</div>
<div class="t" style="left:250.50px;top:104.84px;font-size:5.5px;line-height:5.5px;color:#555;font-family:'Liberation Sans',sans-serif;transform:scale(0.819,1.000);">1</div>
<svg class="r" style="left:311.5px;top:101.8px" width="7" height="13" viewBox="0 0 7 13"><path d="M0.5 0.5 H6 L3.25 4.2Z M3.25 4.2 L0.5 7.5 H6Z" fill="#fff" stroke="#8a8a8a" stroke-width="0.7"/><rect x="0.8" y="7.5" width="4.9" height="4.8" fill="#fff" stroke="#8a8a8a" stroke-width="0.7"/><path d="M0.8 10 H5.7" stroke="#aaa" stroke-width="0.6"/></svg>
<svg class="r" style="left:708px;top:106px" width="9" height="6" viewBox="0 0 9 6"><path d="M4.5 0.5 L0.8 5 H8.2Z" fill="#fff" stroke="#888" stroke-width="0.8"/></svg>
<div class="r" style="left:2px;top:103px;width:9px;height:9px;background:#f0f0f0;border:1px solid #d6d6d6"></div>
<svg class="r" style="left:4px;top:105px" width="5" height="5" viewBox="0 0 5 5"><path d="M1 0.5 V3.5 H4.5" fill="none" stroke="#444" stroke-width="0.9"/></svg>
<div class="r" style="left:3px;top:112px;width:6px;height:431px;background:#fff;border-right:1px solid #ececec;border-left:1px solid #ececec"></div>
<svg class="r" style="left:3px;top:112px" width="7" height="431" viewBox="0 0 7 431"><rect x="2.50" y="14.66" width="1" height="0.7" fill="#bdbdbd"/><rect x="2.50" y="22.32" width="1" height="0.7" fill="#bdbdbd"/><rect x="2.50" y="29.99" width="1" height="0.7" fill="#bdbdbd"/><rect x="1.75" y="37.65" width="2.5" height="0.7" fill="#bdbdbd"/><rect x="2.50" y="45.31" width="1" height="0.7" fill="#bdbdbd"/><rect x="2.50" y="52.97" width="1" height="0.7" fill="#bdbdbd"/><rect x="2.50" y="60.64" width="1" height="0.7" fill="#bdbdbd"/><rect x="2.50" y="75.96" width="1" height="0.7" fill="#bdbdbd"/><rect x="2.50" y="83.62" width="1" height="0.7" fill="#bdbdbd"/><rect x="2.50" y="91.29" width="1" height="0.7" fill="#bdbdbd"/><rect x="1.75" y="98.95" width="2.5" height="0.7" fill="#bdbdbd"/><rect x="2.50" y="106.61" width="1" height="0.7" fill="#bdbdbd"/><rect x="2.50" y="114.27" width="1" height="0.7" fill="#bdbdbd"/><rect x="2.50" y="121.94" width="1" height="0.7" fill="#bdbdbd"/><rect x="2.50" y="137.26" width="1" height="0.7" fill="#bdbdbd"/><rect x="2.50" y="144.93" width="1" height="0.7" fill="#bdbdbd"/><rect x="2.50" y="152.59" width="1" height="0.7" fill="#bdbdbd"/><rect x="1.75" y="160.25" width="2.5" height="0.7" fill="#bdbdbd"/><rect x="2.50" y="167.91" width="1" height="0.7" fill="#bdbdbd"/><rect x="2.50" y="175.57" width="1" height="0.7" fill="#bdbdbd"/><rect x="2.50" y="183.24" width="1" height="0.7" fill="#bdbdbd"/><rect x="2.50" y="198.56" width="1" height="0.7" fill="#bdbdbd"/><rect x="2.50" y="206.22" width="1" height="0.7" fill="#bdbdbd"/><rect x="2.50" y="213.89" width="1" height="0.7" fill="#bdbdbd"/><rect x="1.75" y="221.55" width="2.5" height="0.7" fill="#bdbdbd"/><rect x="2.50" y="229.21" width="1" height="0.7" fill="#bdbdbd"/><rect x="2.50" y="236.88" width="1" height="0.7" fill="#bdbdbd"/><rect x="2.50" y="244.54" width="1" height="0.7" fill="#bdbdbd"/><rect x="2.50" y="259.86" width="1" height="0.7" fill="#bdbdbd"/><rect x="2.50" y="267.52" width="1" height="0.7" fill="#bdbdbd"/><rect x="2.50" y="275.19" width="1" height="0.7" fill="#bdbdbd"/><rect x="1.75" y="282.85" width="2.5" height="0.7" fill="#bdbdbd"/><rect x="2.50" y="290.51" width="1" height="0.7" fill="#bdbdbd"/><rect x="2.50" y="298.17" width="1" height="0.7" fill="#bdbdbd"/><rect x="2.50" y="305.84" width="1" height="0.7" fill="#bdbdbd"/><rect x="2.50" y="321.16" width="1" height="0.7" fill="#bdbdbd"/><rect x="2.50" y="328.82" width="1" height="0.7" fill="#bdbdbd"/><rect x="2.50" y="336.49" width="1" height="0.7" fill="#bdbdbd"/><rect x="1.75" y="344.15" width="2.5" height="0.7" fill="#bdbdbd"/><rect x="2.50" y="351.81" width="1" height="0.7" fill="#bdbdbd"/><rect x="2.50" y="359.47" width="1" height="0.7" fill="#bdbdbd"/><rect x="2.50" y="367.14" width="1" height="0.7" fill="#bdbdbd"/><rect x="2.50" y="382.46" width="1" height="0.7" fill="#bdbdbd"/><rect x="2.50" y="390.12" width="1" height="0.7" fill="#bdbdbd"/><rect x="2.50" y="397.79" width="1" height="0.7" fill="#bdbdbd"/></svg>
<div class="t" style="left:1px;top:114.00px;width:10px;height:10px;line-height:10px;text-align:center;font-size:5.5px;color:#666;transform:rotate(-90deg);transform-origin:50% 50%">2</div>
<div class="t" style="left:1px;top:175.30px;width:10px;height:10px;line-height:10px;text-align:center;font-size:5.5px;color:#666;transform:rotate(-90deg);transform-origin:50% 50%">3</div>
<div class="t" style="left:1px;top:236.60px;width:10px;height:10px;line-height:10px;text-align:center;font-size:5.5px;color:#666;transform:rotate(-90deg);transform-origin:50% 50%">4</div>
<div class="t" style="left:1px;top:297.90px;width:10px;height:10px;line-height:10px;text-align:center;font-size:5.5px;color:#666;transform:rotate(-90deg);transform-origin:50% 50%">5</div>
<div class="t" style="left:1px;top:359.20px;width:10px;height:10px;line-height:10px;text-align:center;font-size:5.5px;color:#666;transform:rotate(-90deg);transform-origin:50% 50%">6</div>
<div class="t" style="left:1px;top:420.50px;width:10px;height:10px;line-height:10px;text-align:center;font-size:5.5px;color:#666;transform:rotate(-90deg);transform-origin:50% 50%">7</div>
<div class="t" style="left:1px;top:481.80px;width:10px;height:10px;line-height:10px;text-align:center;font-size:5.5px;color:#666;transform:rotate(-90deg);transform-origin:50% 50%">8</div>
<div class="r" style="left:1015px;top:102px;width:9px;height:441px;background:#e9e9e9"></div>
<div class="r" style="left:1015px;top:102px;width:9px;height:9px;background:#fff;border:1px solid #d0d0d0"></div>
<svg class="r" style="left:1017px;top:104px" width="5" height="4" viewBox="0 0 5 4"><path d="M0.5 3 L2.5 0.8 L4.5 3Z" fill="#555"/></svg>
<div class="r" style="left:1015px;top:228px;width:9px;height:259px;background:#fff;border:1px solid #c6c6c6"></div>
<div class="r" style="left:1015px;top:534px;width:9px;height:8px;background:#fff;border:1px solid #d0d0d0"></div>
<svg class="r" style="left:1017px;top:536px" width="5" height="4" viewBox="0 0 5 4"><path d="M0.5 1 L2.5 3.2 L4.5 1Z" fill="#555"/></svg>
<div class="r" style="left:300px;top:115.3px;width:440px;height:10px;overflow:hidden">
<div class="t" style="left:14.80px;top:-4.16px;font-size:9.4px;line-height:9.4px;color:#111;font-family:'Liberation Sans',sans-serif;transform:scale(0.949,1.000);">(8,58%) şi cunoaşterea şi adoptarea acquis-ului comunitar (4,65%). Tabloul complet al dificultăţilor pe</div>
</div>
<div class="t" style="left:314.80px;top:121.64px;font-size:9.4px;line-height:9.4px;color:#111;font-family:'Liberation Sans',sans-serif;transform:scale(0.953,1.000);">care le întâmpină IMM-urile în anul 2015 este reprezentat grafic în figura 1.</div>
<div class="r" style="left:340px;top:156px;width:349px;height:226px;background:#fff;border:1px solid #e3e3e3"></div>
<div class="r" style="left:491.5px;top:166px;width:0.8px;height:193px;background:#ececec"></div>
<div class="t" style="left:458.70px;top:168.59px;font-size:8.4px;line-height:8.4px;color:#595959;font-family:'Liberation Sans',sans-serif;transform:scale(0.811,1.000);">Birocraţia</div>
<div class="r" style="left:492.2px;top:170.9px;width:158.44px;height:3.2px;background:#5a8fc2"></div>
<div class="t" style="left:655.24px;top:168.76px;font-size:8.2px;line-height:8.2px;color:#595959;font-family:'Liberation Sans',sans-serif;transform:scale(0.780,1.000);">61,41%</div>
<div class="t" style="left:428.20px;top:178.14px;font-size:8.4px;line-height:8.4px;color:#595959;font-family:'Liberation Sans',sans-serif;transform:scale(0.765,1.000);">Fiscalitatea excesivă</div>
<div class="r" style="left:492.2px;top:180.45px;width:141.23px;height:3.2px;background:#5a8fc2"></div>
<div class="t" style="left:638.03px;top:178.31px;font-size:8.2px;line-height:8.2px;color:#595959;font-family:'Liberation Sans',sans-serif;transform:scale(0.780,1.000);">54,74%</div>
<div class="t" style="left:462.00px;top:187.68px;font-size:8.4px;line-height:8.4px;color:#595959;font-family:'Liberation Sans',sans-serif;transform:scale(0.802,1.000);">Corupţia</div>
<div class="r" style="left:492.2px;top:189.99px;width:116.51px;height:3.2px;background:#5a8fc2"></div>
<div class="t" style="left:613.31px;top:187.85px;font-size:8.2px;line-height:8.2px;color:#595959;font-family:'Liberation Sans',sans-serif;transform:scale(0.780,1.000);">45,16%</div>
<div class="t" style="left:427.80px;top:197.23px;font-size:8.4px;line-height:8.4px;color:#595959;font-family:'Liberation Sans',sans-serif;transform:scale(0.765,1.000);">Controalele excesive</div>
<div class="r" style="left:492.2px;top:199.54px;width:116.05px;height:3.2px;background:#5a8fc2"></div>
<div class="t" style="left:612.85px;top:197.40px;font-size:8.2px;line-height:8.2px;color:#595959;font-family:'Liberation Sans',sans-serif;transform:scale(0.780,1.000);">44,98%</div>
<div class="t" style="left:429.70px;top:206.78px;font-size:8.4px;line-height:8.4px;color:#595959;font-family:'Liberation Sans',sans-serif;transform:scale(0.773,1.000);">Concurenţa neloială</div>
<div class="r" style="left:492.2px;top:209.09px;width:104.05px;height:3.2px;background:#5a8fc2"></div>
<div class="t" style="left:600.85px;top:206.95px;font-size:8.2px;line-height:8.2px;color:#595959;font-family:'Liberation Sans',sans-serif;transform:scale(0.780,1.000);">40,33%</div>
<div class="t" style="left:419.20px;top:216.32px;font-size:8.4px;line-height:8.4px;color:#595959;font-family:'Liberation Sans',sans-serif;transform:scale(0.766,1.000);">Scăderea cererii interne</div>
<div class="r" style="left:492.2px;top:218.64px;width:93.68px;height:3.2px;background:#5a8fc2"></div>
<div class="t" style="left:590.48px;top:216.49px;font-size:8.2px;line-height:8.2px;color:#595959;font-family:'Liberation Sans',sans-serif;transform:scale(0.780,1.000);">36,31%</div>
<div class="t" style="left:350.90px;top:225.87px;font-size:8.4px;line-height:8.4px;color:#595959;font-family:'Liberation Sans',sans-serif;transform:scale(0.754,1.000);">Angajarea, pregătirea şi menţinerea personalului</div>
<div class="r" style="left:492.2px;top:228.18px;width:68.03px;height:3.2px;background:#5a8fc2"></div>
<div class="t" style="left:564.83px;top:226.04px;font-size:8.2px;line-height:8.2px;color:#595959;font-family:'Liberation Sans',sans-serif;transform:scale(0.780,1.000);">26,37%</div>
<div class="t" style="left:375.70px;top:235.42px;font-size:8.4px;line-height:8.4px;color:#595959;font-family:'Liberation Sans',sans-serif;transform:scale(0.758,1.000);">Creşterea nivelului cheltuielilor salariale</div>
<div class="r" style="left:492.2px;top:237.73px;width:63.31px;height:3.2px;background:#5a8fc2"></div>
<div class="t" style="left:560.11px;top:235.59px;font-size:8.2px;line-height:8.2px;color:#595959;font-family:'Liberation Sans',sans-serif;transform:scale(0.780,1.000);">24,54%</div>
<div class="t" style="left:466.90px;top:244.97px;font-size:8.4px;line-height:8.4px;color:#595959;font-family:'Liberation Sans',sans-serif;transform:scale(0.831,1.000);">Inflaţia</div>
<div class="r" style="left:492.2px;top:247.28px;width:56.5px;height:3.2px;background:#5a8fc2"></div>
<div class="t" style="left:553.30px;top:245.13px;font-size:8.2px;line-height:8.2px;color:#595959;font-family:'Liberation Sans',sans-serif;transform:scale(0.780,1.000);">21,90%</div>
<div class="t" style="left:392.80px;top:254.51px;font-size:8.4px;line-height:8.4px;color:#595959;font-family:'Liberation Sans',sans-serif;transform:scale(0.760,1.000);">Concurenţa produselor din import</div>
<div class="r" style="left:492.2px;top:256.82px;width:50.85px;height:3.2px;background:#5a8fc2"></div>
<div class="t" style="left:547.65px;top:254.68px;font-size:8.2px;line-height:8.2px;color:#595959;font-family:'Liberation Sans',sans-serif;transform:scale(0.780,1.000);">19,71%</div>
<div class="t" style="left:343.66px;top:264.06px;font-size:8.4px;line-height:8.4px;color:#595959;font-family:'Liberation Sans',sans-serif;transform:scale(0.755,1.000);">Întârzieri la încasarea facturilor de la firmele private</div>
<div class="r" style="left:492.2px;top:266.37px;width:50.62px;height:3.2px;background:#5a8fc2"></div>
<div class="t" style="left:547.42px;top:264.23px;font-size:8.2px;line-height:8.2px;color:#595959;font-family:'Liberation Sans',sans-serif;transform:scale(0.780,1.000);">19,62%</div>
<div class="t" style="left:401.60px;top:273.61px;font-size:8.4px;line-height:8.4px;color:#595959;font-family:'Liberation Sans',sans-serif;transform:scale(0.760,1.000);">Calitatea slabă a infrastructurii</div>
<div class="r" style="left:492.2px;top:275.92px;width:46.85px;height:3.2px;background:#5a8fc2"></div>
<div class="t" style="left:543.65px;top:273.78px;font-size:8.2px;line-height:8.2px;color:#595959;font-family:'Liberation Sans',sans-serif;transform:scale(0.780,1.000);">18,16%</div>
<div class="t" style="left:401.60px;top:283.15px;font-size:8.4px;line-height:8.4px;color:#595959;font-family:'Liberation Sans',sans-serif;transform:scale(0.760,1.000);">Costurile ridicate ale creditelor</div>
<div class="r" style="left:492.2px;top:285.46px;width:39.32px;height:3.2px;background:#5a8fc2"></div>
<div class="t" style="left:536.12px;top:283.32px;font-size:8.2px;line-height:8.2px;color:#595959;font-family:'Liberation Sans',sans-serif;transform:scale(0.780,1.000);">15,24%</div>
<div class="t" style="left:370.50px;top:292.70px;font-size:8.4px;line-height:8.4px;color:#595959;font-family:'Liberation Sans',sans-serif;transform:scale(0.757,1.000);">Instabilitatea relativă a monedei naţionale</div>
<div class="r" style="left:492.2px;top:295.01px;width:33.9px;height:3.2px;background:#5a8fc2"></div>
<div class="t" style="left:530.70px;top:292.87px;font-size:8.2px;line-height:8.2px;color:#595959;font-family:'Liberation Sans',sans-serif;transform:scale(0.780,1.000);">13,14%</div>
<div class="t" style="left:421.30px;top:302.25px;font-size:8.4px;line-height:8.4px;color:#595959;font-family:'Liberation Sans',sans-serif;transform:scale(0.762,1.000);">Accesul dificil la credite</div>
<div class="r" style="left:492.2px;top:304.56px;width:32.25px;height:3.2px;background:#5a8fc2"></div>
<div class="t" style="left:529.05px;top:302.42px;font-size:8.2px;line-height:8.2px;color:#595959;font-family:'Liberation Sans',sans-serif;transform:scale(0.780,1.000);">12,50%</div>
<div class="t" style="left:365.30px;top:311.79px;font-size:8.4px;line-height:8.4px;color:#595959;font-family:'Liberation Sans',sans-serif;transform:scale(0.754,1.000);">Neplata facturilor de catre instituţiile statului</div>
<div class="r" style="left:492.2px;top:314.11px;width:29.44px;height:3.2px;background:#5a8fc2"></div>
<div class="t" style="left:526.24px;top:311.96px;font-size:8.2px;line-height:8.2px;color:#595959;font-family:'Liberation Sans',sans-serif;transform:scale(0.780,1.000);">11,41%</div>
<div class="t" style="left:414.50px;top:321.34px;font-size:8.4px;line-height:8.4px;color:#595959;font-family:'Liberation Sans',sans-serif;transform:scale(0.763,1.000);">Scăderea cererii la export</div>
<div class="r" style="left:492.2px;top:323.65px;width:25.9px;height:3.2px;background:#5a8fc2"></div>
<div class="t" style="left:522.70px;top:321.51px;font-size:8.2px;line-height:8.2px;color:#595959;font-family:'Liberation Sans',sans-serif;transform:scale(0.780,1.000);">10,04%</div>
<div class="t" style="left:343.50px;top:330.89px;font-size:8.4px;line-height:8.4px;color:#595959;font-family:'Liberation Sans',sans-serif;transform:scale(0.756,1.000);">Obţinerea consultanţei şi trainingului necesar firmei</div>
<div class="r" style="left:492.2px;top:333.2px;width:22.14px;height:3.2px;background:#5a8fc2"></div>
<div class="t" style="left:518.94px;top:331.06px;font-size:8.2px;line-height:8.2px;color:#595959;font-family:'Liberation Sans',sans-serif;transform:scale(0.780,1.000);">8,58%</div>
<div class="t" style="left:352.20px;top:340.44px;font-size:8.4px;line-height:8.4px;color:#595959;font-family:'Liberation Sans',sans-serif;transform:scale(0.759,1.000);">Cunoaşterea şi adoptarea acquis-ului comunitar</div>
<div class="r" style="left:492.2px;top:342.75px;width:12.0px;height:3.2px;background:#5a8fc2"></div>
<div class="t" style="left:508.80px;top:340.60px;font-size:8.2px;line-height:8.2px;color:#595959;font-family:'Liberation Sans',sans-serif;transform:scale(0.780,1.000);">4,65%</div>
<div class="t" style="left:470.00px;top:349.98px;font-size:8.4px;line-height:8.4px;color:#595959;font-family:'Liberation Sans',sans-serif;transform:scale(0.833,1.000);">Altele</div>
<div class="r" style="left:492.2px;top:352.29px;width:0.7px;height:3.2px;background:#5a8fc2"></div>
<div class="t" style="left:497.50px;top:350.15px;font-size:8.2px;line-height:8.2px;color:#595959;font-family:'Liberation Sans',sans-serif;transform:scale(0.780,1.000);">0,27%</div>
<div class="t" style="left:487.38px;top:367.66px;font-size:8.2px;line-height:8.2px;color:#595959;font-family:'Liberation Sans',sans-serif;transform:scale(0.780,1.000);">0%</div>
<div class="t" style="left:511.40px;top:367.66px;font-size:8.2px;line-height:8.2px;color:#595959;font-family:'Liberation Sans',sans-serif;transform:scale(0.780,1.000);">10%</div>
<div class="t" style="left:537.20px;top:367.66px;font-size:8.2px;line-height:8.2px;color:#595959;font-family:'Liberation Sans',sans-serif;transform:scale(0.780,1.000);">20%</div>
<div class="t" style="left:563.00px;top:367.66px;font-size:8.2px;line-height:8.2px;color:#595959;font-family:'Liberation Sans',sans-serif;transform:scale(0.780,1.000);">30%</div>
<div class="t" style="left:588.80px;top:367.66px;font-size:8.2px;line-height:8.2px;color:#595959;font-family:'Liberation Sans',sans-serif;transform:scale(0.780,1.000);">40%</div>
<div class="t" style="left:614.60px;top:367.66px;font-size:8.2px;line-height:8.2px;color:#595959;font-family:'Liberation Sans',sans-serif;transform:scale(0.780,1.000);">50%</div>
<div class="t" style="left:640.40px;top:367.66px;font-size:8.2px;line-height:8.2px;color:#595959;font-family:'Liberation Sans',sans-serif;transform:scale(0.780,1.000);">60%</div>
<div class="t" style="left:666.20px;top:367.66px;font-size:8.2px;line-height:8.2px;color:#595959;font-family:'Liberation Sans',sans-serif;transform:scale(0.780,1.000);">70%</div>
<div class="t" style="left:496.60px;top:387.77px;font-size:8.3px;line-height:8.3px;color:#111;font-family:'Liberation Sans',sans-serif;font-weight:bold;transform:scale(1.072,1.000);">Figura 1</div>
<div class="t" style="left:384.00px;top:398.37px;font-size:8.3px;line-height:8.3px;color:#111;font-family:'Liberation Sans',sans-serif;font-weight:bold;transform:scale(1.079,1.000);">Frecvenţa dificultăţilor majore cu care se confruntă IMM-urile</div>
<div class="t" style="left:314.80px;top:419.64px;font-size:9.4px;line-height:9.4px;color:#111;font-family:'Liberation Sans',sans-serif;transform:scale(1.091,1.000);">(Sursa: Carta Albă a IMM-urilor din România, 2016)</div>
<div class="t" style="left:3.50px;top:546.21px;font-size:6.6px;line-height:6.6px;color:#fff;font-family:'Liberation Sans',sans-serif;transform:scale(0.845,1.000);">PAGE 1 OF 1</div>
<div class="t" style="left:47.50px;top:546.21px;font-size:6.6px;line-height:6.6px;color:#fff;font-family:'Liberation Sans',sans-serif;transform:scale(0.852,1.000);">149 WORDS</div>
<svg class="r" style="left:90px;top:544px" width="10" height="9" viewBox="0 0 10 9"><path d="M0.5 1 H4 V8 H0.5Z M4 1 H8 V4" fill="none" stroke="#dde6f3" stroke-width="0.8"/><path d="M5 6 L6.5 7.5 L9 5" fill="none" stroke="#dde6f3" stroke-width="0.8"/></svg>
<div class="t" style="left:108.00px;top:546.21px;font-size:6.6px;line-height:6.6px;color:#fff;font-family:'Liberation Sans',sans-serif;transform:scale(0.863,1.000);">ROMANIAN</div>
<svg class="r" style="left:874px;top:545px" width="9" height="8" viewBox="0 0 9 8"><path d="M0.5 0.5 H4 V7.5 H0.5Z M5 0.5 H8.5 V7.5 H5Z" fill="#c9d4e8" stroke="#dde6f3" stroke-width="0.6"/></svg>
<div class="r" style="left:888px;top:543px;width:21px;height:11px;background:#1e4580"></div>
<svg class="r" style="left:894.5px;top:545px" width="8" height="8" viewBox="0 0 8 8"><rect x="0" y="0" width="8" height="8" fill="#c3cfe4"/><path d="M1.5 2 H6.5 M1.5 4 H6.5 M1.5 6 H6.5" stroke="#8fa5c9" stroke-width="0.6"/></svg>
<svg class="r" style="left:915px;top:544px" width="9" height="9" viewBox="0 0 9 9"><rect x="0.5" y="0.5" width="7" height="7" fill="none" stroke="#dde6f3" stroke-width="0.8"/><path d="M0.5 2.5 H7.5" stroke="#dde6f3" stroke-width="0.8"/><circle cx="6.5" cy="6.5" r="2" fill="#2b579a" stroke="#dde6f3" stroke-width="0.7"/></svg>
<div class="r" style="left:931px;top:548px;width:4px;height:1.2px;background:#fff"></div>
<div class="r" style="left:937px;top:548px;width:54px;height:0.8px;background:#b7c7e0"></div>
<div class="r" style="left:964px;top:545px;width:2.5px;height:7px;background:#fff"></div>
<div class="r" style="left:992px;top:548px;width:5px;height:1.2px;background:#fff"></div>
<div class="r" style="left:993.9px;top:546.1px;width:1.2px;height:5px;background:#fff"></div>
<div class="t" style="left:1004.60px;top:546.21px;font-size:6.6px;line-height:6.6px;color:#fff;font-family:'Liberation Sans',sans-serif;transform:scale(0.840,1.000);">120%</div>
<div class="r" style="left:0px;top:554px;width:27px;height:22px;background:#5b2c35"></div>
<svg class="r" style="left:5.5px;top:558px" width="15" height="14" viewBox="0 0 15 14"><path d="M0 2 L6.2 1.1 V6.5 H0Z M7 1 L15 0 V6.5 H7Z M0 7.4 H6.2 V12.9 L0 12Z M7 7.4 H15 V14 L7 13Z" fill="#fff"/></svg>
<div class="r" style="left:28px;top:555px;width:31px;height:21px;background:#7c5a5f"></div>
<div class="r" style="left:61px;top:555px;width:30px;height:21px;background:#7c5a5f"></div>
<div class="r" style="left:94px;top:555px;width:31px;height:21px;background:#a58b8e;border:1px solid #b9a4a6"></div>
<svg class="r" style="left:34px;top:558px" width="18" height="15" viewBox="0 0 18 15"><rect x="7" y="3" width="10" height="9" fill="#fff"/><path d="M8 5 L12 8.5 L16 5" fill="none" stroke="#0f6cbd" stroke-width="1.2"/><path d="M0 2 L10 0 V15 L0 13Z" fill="#0f6cbd"/><ellipse cx="5" cy="7.5" rx="2.5" ry="3.2" fill="none" stroke="#fff" stroke-width="1.4"/></svg>
<svg class="r" style="left:68px;top:558px" width="16" height="16" viewBox="0 0 16 16"><circle cx="8" cy="8" r="7.5" fill="#db4437"/><path d="M8 8 L1.5 11.75 A7.5 7.5 0 0 0 10.5 15.1Z" fill="#0f9d58"/><path d="M8 8 L14.9 5 A7.5 7.5 0 0 1 10.5 15.1 Z" fill="#f4c20d"/><circle cx="8" cy="8" r="3.6" fill="#fff"/><circle cx="8" cy="8" r="2.7" fill="#4285f4"/></svg>
<svg class="r" style="left:101px;top:558px" width="17" height="15" viewBox="0 0 17 15"><rect x="6" y="2" width="10" height="11" fill="#fff"/><path d="M9 4.5 H15 M9 6.5 H15 M9 8.5 H15 M9 10.5 H15" stroke="#2b579a" stroke-width="0.8"/><path d="M0 2 L9 0 V15 L0 13Z" fill="#2b579a"/><path d="M1.5 5 L2.8 10.5 L4.5 6.5 L6.2 10.5 L7.5 5" fill="none" stroke="#fff" stroke-width="1"/></svg>
<div class="r" style="left:902px;top:554px;width:122px;height:22px;background:#5e2f37"></div>
<svg class="r" style="left:901px;top:564px" width="5" height="4" viewBox="0 0 5 4"><path d="M0 3.5 L2.5 0.5 L5 3.5Z" fill="#fff"/></svg>
<svg class="r" style="left:911px;top:561px" width="9" height="9" viewBox="0 0 9 9"><path d="M1 0.5 V9" stroke="#fff" stroke-width="1"/><path d="M1.5 1 H8 L6.5 3 L8 5 H1.5Z" fill="#fff"/></svg>
<svg class="r" style="left:925px;top:561px" width="8" height="9" viewBox="0 0 8 9"><path d="M1 1 H3 M1 1 V7 H3 M5 1 H7 V7 H5" fill="none" stroke="#fff" stroke-width="0.9"/><path d="M4 3 V9" stroke="#fff" stroke-width="0.9"/></svg>
<svg class="r" style="left:938px;top:561px" width="9" height="9" viewBox="0 0 9 9"><path d="M0.5 3 H2.5 L5 0.8 V8.2 L2.5 6 H0.5Z" fill="#fff"/><path d="M6.5 2.5 Q8 4.5 6.5 6.5" fill="none" stroke="#fff" stroke-width="0.8"/></svg>
<svg class="r" style="left:951px;top:561px" width="8" height="8" viewBox="0 0 8 8"><path d="M0 0 H3.5 V3.5 H0Z M4.5 0 H8 V3.5 H4.5Z M0 4.5 H3.5 V8 H0Z M4.5 4.5 H8 V8 H4.5Z" fill="#fff"/></svg>
<div class="t" style="left:966.70px;top:562.84px;font-size:6.8px;line-height:6.8px;color:#fff;font-family:'Liberation Sans',sans-serif;transform:scale(0.788,1.000);">ENG</div>
<div class="t" style="left:988.60px;top:558.04px;font-size:6.8px;line-height:6.8px;color:#fff;font-family:'Liberation Sans',sans-serif;transform:scale(0.950,1.000);">9:36 AM</div>
<div class="t" style="left:988.60px;top:567.24px;font-size:6.8px;line-height:6.8px;color:#fff;font-family:'Liberation Sans',sans-serif;transform:scale(0.933,1.000);">8/2/2016</div>
</body></html>
